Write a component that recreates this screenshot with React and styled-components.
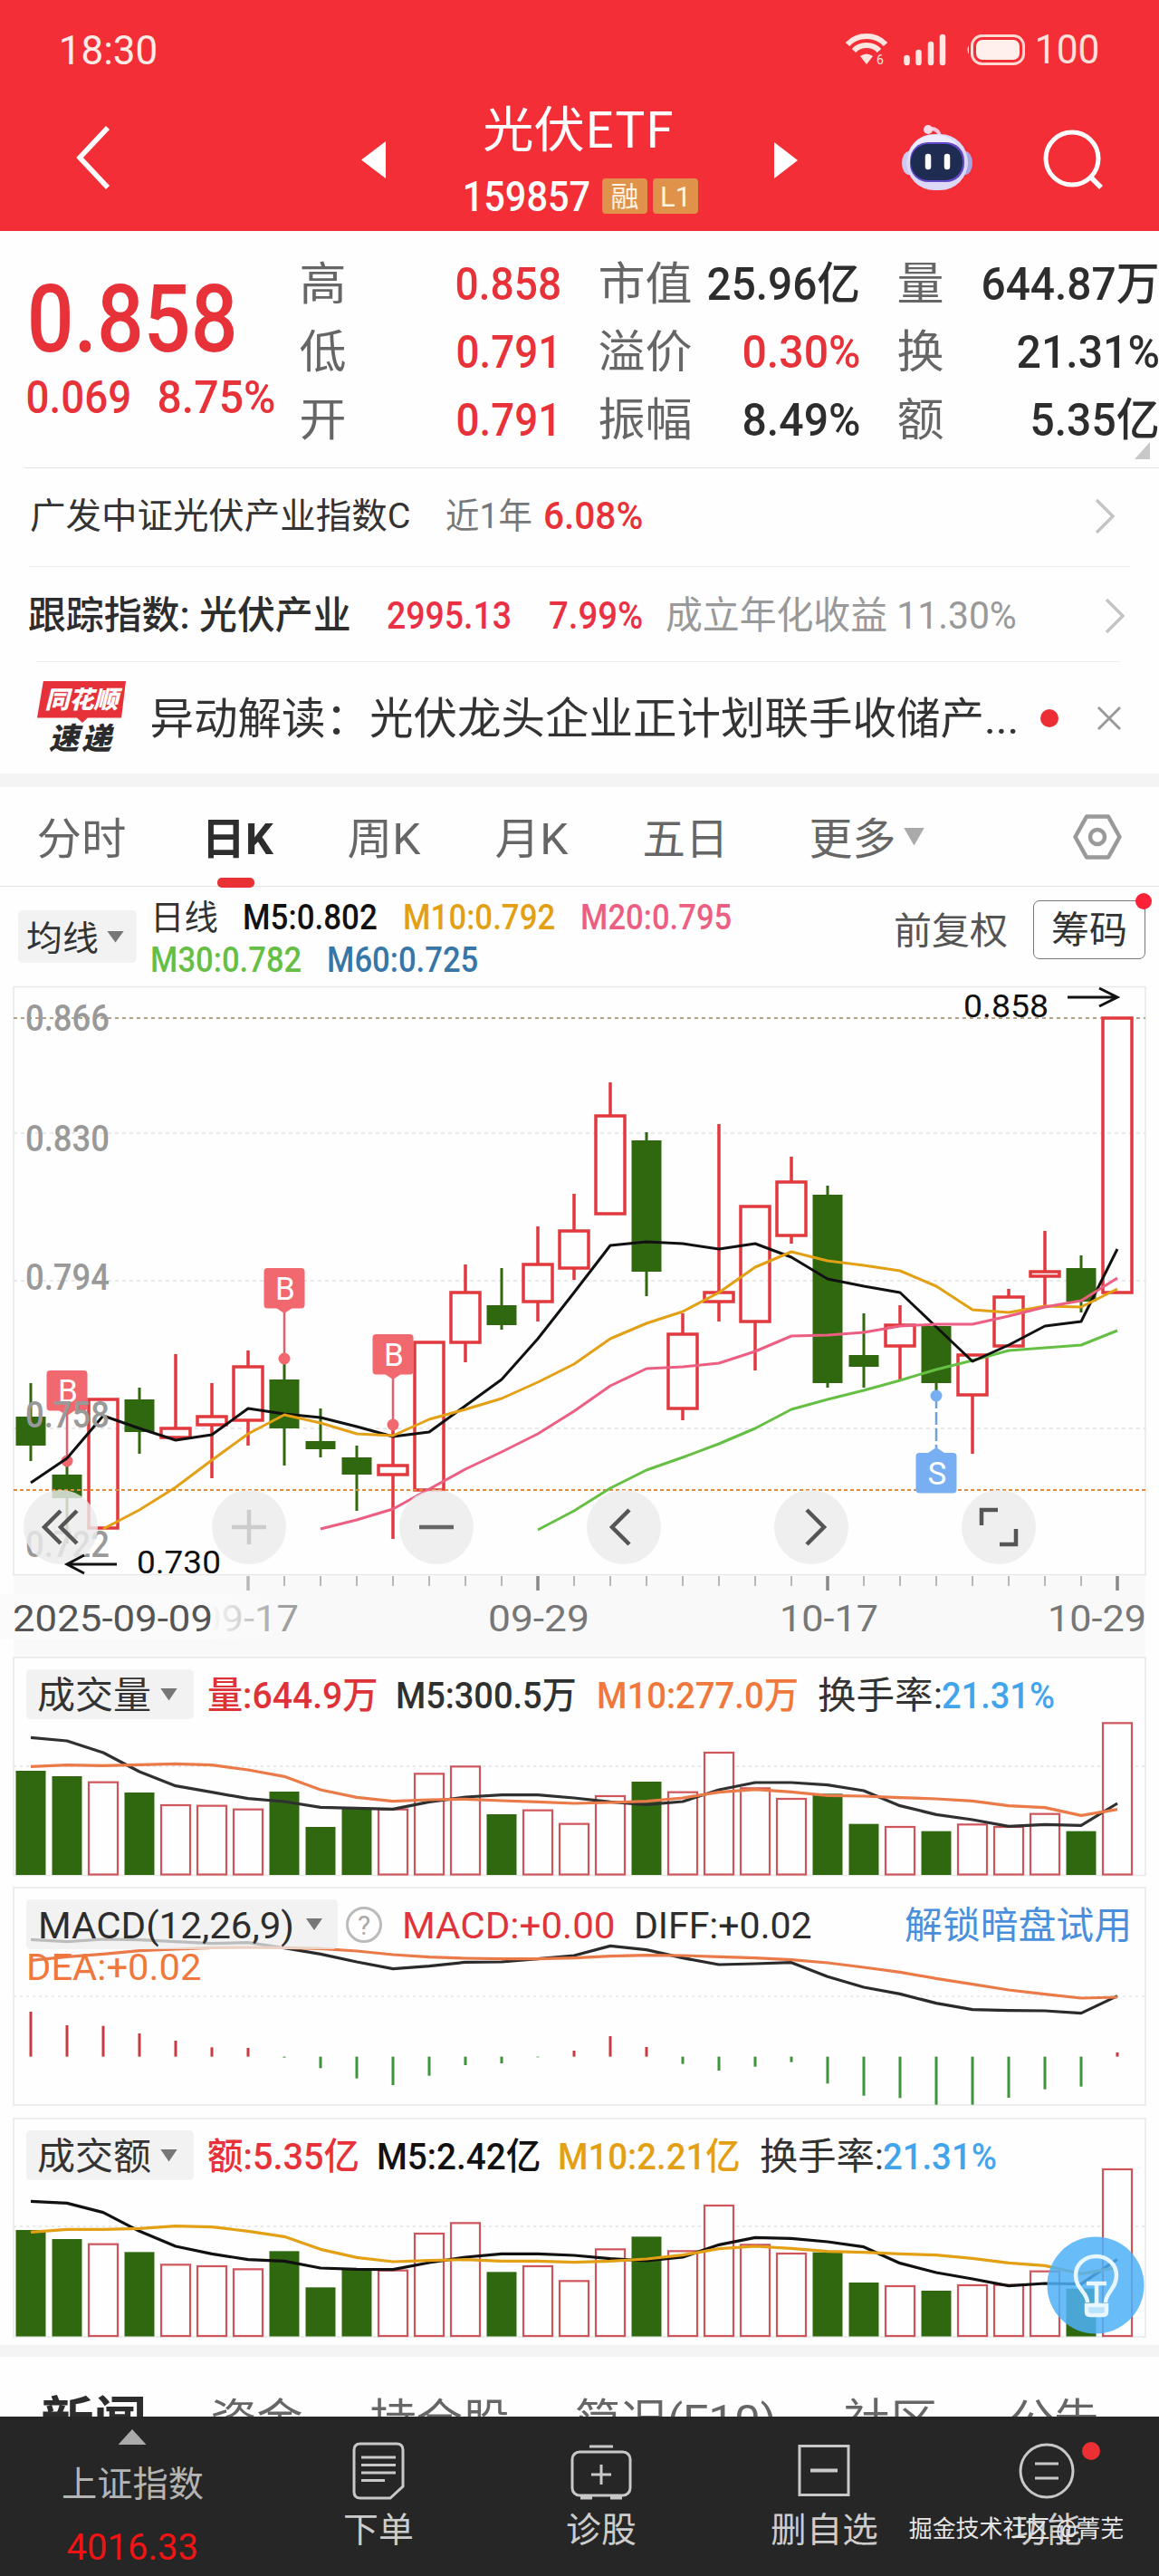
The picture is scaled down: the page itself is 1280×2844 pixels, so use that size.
import { useLayoutEffect, useRef, useState } from 'react'
import styled, { createGlobalStyle } from 'styled-components'

const red = '#e8323a'
const green = '#30680f'
const orange = '#f0783c'
const yellow = '#e3a014'
const pink = '#ec5f83'
const lime = '#66bf45'
const blue = '#42a5ec'

// Text that is squeezed to a given width, the way the condensed DIN digits look
const Fit = ({ children, w, size = 41, ...rest }) => {
  const ref = useRef()
  const [scale, setScale] = useState(1)
  const pad = size * 0.1

  useLayoutEffect(() => {
    setScale((w + pad) / ref.current.offsetWidth)
  }, [w, pad, children])

  return (
    <Text $w={w} $size={size} {...rest}>
      <span
        ref={ref}
        style={{ transform: `translateX(${-pad / 2}px) scaleX(${scale})` }}
      >
        {children}
      </span>
    </Text>
  )
}

// one candle = high, top of body, bottom of body, low
const candles = [
  ['g', 1527, 1564, 1596, 1613],
  ['g', 1613, 1628, 1654, 1704],
  ['r', 1545, 1545, 1687, 1687],
  ['g', 1532, 1545, 1581, 1605],
  ['r', 1495, 1577, 1587, 1587],
  ['r', 1527, 1564, 1573, 1632],
  ['r', 1491, 1509, 1568, 1596],
  ['g', 1500, 1523, 1577, 1618],
  ['g', 1555, 1591, 1600, 1609],
  ['g', 1596, 1609, 1628, 1668],
  ['r', 1573, 1618, 1628, 1699],
  ['r', 1482, 1482, 1645, 1645],
  ['r', 1396, 1427, 1482, 1504],
  ['g', 1400, 1441, 1463, 1468],
  ['r', 1354, 1396, 1437, 1459],
  ['r', 1318, 1359, 1400, 1413],
  ['r', 1195, 1232, 1340, 1340],
  ['g', 1250, 1259, 1404, 1431],
  ['r', 1450, 1473, 1555, 1568],
  ['r', 1241, 1427, 1437, 1459],
  ['r', 1332, 1332, 1459, 1513],
  ['r', 1277, 1305, 1364, 1373],
  ['g', 1309, 1319, 1527, 1532],
  ['g', 1450, 1496, 1509, 1532],
  ['r', 1441, 1463, 1486, 1523],
  ['g', 1464, 1464, 1527, 1540],
  ['r', 1496, 1496, 1540, 1605],
  ['r', 1423, 1432, 1486, 1486],
  ['r', 1359, 1404, 1409, 1443],
  ['g', 1386, 1400, 1437, 1449],
  ['r', 1124, 1124, 1427, 1427],
]
const m5 = [1637, 1610, 1563, 1577, 1590, 1584, 1555, 1561, 1565, 1575, 1586, 1581, 1552, 1523, 1478, 1427, 1375, 1371, 1373, 1379, 1373, 1388, 1412, 1420, 1427, 1465, 1503, 1485, 1464, 1459, 1379]
const m10 = [1688, 1667, 1642, 1612, 1583, 1562, 1571, 1583, 1585, 1567, 1556, 1544, 1526, 1506, 1478, 1461, 1448, 1427, 1399, 1382, 1392, 1397, 1403, 1420, 1446, 1449, 1442, 1443, 1423]
const m20 = [1688, 1678, 1666, 1644, 1622, 1603, 1583, 1558, 1530, 1511, 1509, 1505, 1492, 1475, 1474, 1471, 1464, 1462, 1462, 1453, 1443, 1436, 1411]
const m30 = [1689, 1668, 1643, 1623, 1609, 1594, 1577, 1556, 1545, 1535, 1524, 1512, 1502, 1491, 1488, 1485, 1469]

// sub charts keep their values in thirds of a pixel
const volume = {
  bars: [405, 423, 443, 477, 519, 521, 533, 474, 591, 531, 533, 415, 391, 549, 536, 581, 489, 441, 476, 345, 463, 498, 481, 581, 591, 605, 583, 591, 548, 605, 247],
  fast: [295, 306, 345, 408, 455, 476, 497, 507, 526, 529, 532, 508, 492, 485, 485, 495, 508, 517, 507, 468, 444, 444, 452, 471, 521, 550, 567, 589, 583, 586, 513],
  slow: [391, 386, 388, 385, 382, 386, 402, 424, 468, 493, 506, 501, 499, 504, 508, 513, 510, 506, 495, 476, 467, 475, 487, 489, 494, 498, 505, 521, 527, 553, 533],
}
const amount = {
  bars: [411, 441, 458, 484, 526, 531, 541, 481, 601, 542, 545, 423, 388, 550, 531, 580, 475, 433, 481, 330, 460, 489, 485, 585, 597, 612, 594, 593, 548, 605, 210],
  fast: [316, 322, 353, 415, 465, 490, 509, 514, 537, 541, 542, 519, 501, 490, 490, 495, 506, 513, 501, 460, 436, 439, 450, 467, 521, 552, 573, 596, 588, 590, 508],
  slow: [418, 409, 409, 406, 398, 401, 415, 433, 475, 502, 516, 512, 509, 514, 514, 518, 514, 507, 494, 473, 465, 472, 482, 485, 490, 494, 505, 520, 529, 556, 535],
}
const macd = {
  hist: [453, 498, 500, 525, 549, 571, 573, 605, 640, 674, 696, 665, 630, 624, 604, 582, 534, 570, 626, 648, 635, 620, 691, 731, 739, 761, 761, 738, 710, 701, 588],
  fast: [214, 221, 213, 215, 221, 227, 224, 242, 262, 288, 311, 302, 289, 288, 278, 267, 235, 248, 275, 297, 294, 290, 337, 372, 394, 425, 446, 449, 450, 458, 401],
  slow: [283, 271, 262, 251, 246, 241, 240, 241, 244, 252, 264, 272, 276, 278, 278, 275, 269, 266, 267, 271, 275, 281, 291, 306, 322, 343, 362, 381, 395, 408, 405],
}

const cx = (i) => 34 + i * 40
const line = (values, start = 0, base = 0, k = 1) =>
  values.map((v, i) => `${cx(i + start)},${base + v / k}`).join(' ')

const StatusBar = () => (
  <Status>
    <Fit w={105} size={45} $ml={67} $c='#ffece6'>18:30</Fit>
    <svg width='46' height='36' viewBox='0 0 46 36' fill='none'>
      <g stroke='#ffe6e0' strokeWidth='6'>
        <path d='M2 13 C13 1 33 1 44 13' />
        <path d='M9 20 C16 12 30 12 37 20' />
      </g>
      <path d='M16 26 Q23 21 30 26 L23 35 Z' fill='#ffe6e0' />
      <text x='34' y='35' fontSize='14' fill='#ffe6e0'>6</text>
    </svg>
    <Signal width='47' height='36' viewBox='0 0 47 36'>
      <path
        d='M3.5 27V32 M16.5 21V32 M30 12V32 M43 4V32'
        stroke='#ffe6e0'
        strokeWidth='6.5'
        strokeLinecap='round'
      />
    </Signal>
    <Battery width='66' height='34' viewBox='0 0 66 34'>
      <rect x='6.5' y='1.5' width='57' height='31' rx='11' fill='none' stroke='#ffd9d2' strokeWidth='3' />
      <rect x='11' y='6' width='48' height='22' rx='7' fill='#fff0ec' />
      <path d='M3 12 Q0 17 3 22 Z' fill='#ffe6e0' />
    </Battery>
    <Fit w={67} size={44} $ml={12} $c='#ffe0da'>100</Fit>
  </Status>
)

const Robot = () => (
  <svg width='78' height='74' viewBox='0 0 78 74'>
    <path d='M42 13 Q40 4 30 5' fill='none' stroke='#f4c9de' strokeWidth='4' />
    <circle cx='29' cy='6' r='5' fill='#f7dbe8' />
    <ellipse cx='8' cy='43' rx='8' ry='13' fill='#cfc9ef' />
    <ellipse cx='70' cy='43' rx='8' ry='13' fill='#a9a3e0' />
    <rect x='5' y='11' width='68' height='62' rx='31' fill='#dcd9f8' />
    <rect x='8' y='12' width='58' height='50' rx='27' fill='#eeedff' />
    <rect x='9' y='20' width='60' height='44' rx='20' fill='#6248c8' />
    <rect x='10' y='22' width='57' height='40' rx='19' fill='#1d2c50' />
    <path d='M29 36V47 M50 36V47' stroke='#fff' strokeWidth='6.5' strokeLinecap='round' />
  </svg>
)

const Header = () => (
  <HeaderWrap>
    <StatusBar />
    <Nav>
      <NavIcon $ml={84} width='38' height='70' viewBox='0 0 38 70'>
        <path d='M35 2 L4 35 L35 68' fill='none' stroke='#fff' strokeWidth='5.5' />
      </NavIcon>
      <NavIcon $ml={277} $mt={5} width='27' height='41' viewBox='0 0 27 41'>
        <path d='M27 0V41L0 20.500Z' fill='#fff' />
      </NavIcon>
      <TitleBlock>
        <Fit w={205} size={54} $ml={22} $c='#fff' $cjk>光伏ETF</Fit>
        <CodeRow>
          <Fit w={137} size={46} $ml={-1} $c='#fff' $b={500}>159857</Fit>
          <Tag $ml={15}>融</Tag>
          <Tag $ml={6}>L1</Tag>
        </CodeRow>
      </TitleBlock>
      <NavIcon $ml={84} $mt={5} width='26' height='40' viewBox='0 0 26 40'>
        <path d='M0 0V40L26 20Z' fill='#fff' />
      </NavIcon>
      <NavIcon as='div' $ml={115}>
        <Robot />
      </NavIcon>
      <NavIcon $ml={77} $mt={4} width='68' height='68' viewBox='0 0 68 68'>
        <circle cx='33' cy='33' r='29' fill='none' stroke='#fff' strokeWidth='5' />
        <path d='M53 53 L65 65' stroke='#fff' strokeWidth='5.5' />
      </NavIcon>
    </Nav>
  </HeaderWrap>
)

const quotes = [
  ['高', '0.858', 113, red, '市值', '25.96亿', 165, '#2d2d2d', '量', '644.87万', 192],
  ['低', '0.791', 112, red, '溢价', '0.30%', 126, red, '换', '21.31%', 153],
  ['开', '0.791', 112, red, '振幅', '8.49%', 126, '#2d2d2d', '额', '5.35亿', 138],
]

const Quote = () => (
  <QuoteWrap>
    <PriceBlock>
      <Fit w={222} size={104} $ml={2} $c={red} $b={500}>0.858</Fit>
      <PriceChange>
        <Fit w={112} size={50} $c={red} $b={500}>0.069</Fit>
        <Fit w={126} size={50} $ml={33} $c={red} $b={500}>8.75%</Fit>
      </PriceChange>
    </PriceBlock>
    <QuoteGrid>
      {quotes.map(([a, av, aw, ac, b, bv, bw, bc, c, cv, cw]) => (
        <QuoteRow key={a}>
          <Fit w={47} size={50} $ml={1} $c='#666'>{a}</Fit>
          <Value $w={238}>
            <Fit w={aw} size={50} $c={ac} $b={500}>{av}</Fit>
          </Value>
          <Fit w={99} size={50} $ml={45} $c='#666'>{b}</Fit>
          <Value $w={186}>
            <Fit w={bw} size={50} $c={bc} $b={500}>{bv}</Fit>
          </Value>
          <Fit w={47} size={50} $ml={45} $c='#666'>{c}</Fit>
          <Value $w={238}>
            <Fit w={cw} size={50} $c='#2d2d2d' $b={500}>{cv}</Fit>
          </Value>
        </QuoteRow>
      ))}
    </QuoteGrid>
    <Corner />
  </QuoteWrap>
)

const Chevron = ({ ml }) => (
  <NavIcon $ml={ml} width='23' height='40' viewBox='0 0 23 40'>
    <path d='M2 2 L20 20 L2 38' fill='none' stroke='#c4c4c4' strokeWidth='3.5' />
  </NavIcon>
)

const Infos = () => (
  <>
    <InfoRow $h={109} $pb={4} $l={32} $r={32}>
      <Fit w={416} size={39} $ml={35} $c='#333'>广发中证光伏产业指数C</Fit>
      <Fit w={92} size={39} $ml={43} $c='#777'>近1年</Fit>
      <Fit w={106} size={42} $ml={16} $c={red} $b={500}>6.08%</Fit>
      <Chevron ml={501} />
    </InfoRow>
    <InfoRow $h={105} $pb={-1} $l={40} $r={43}>
      <Fit w={353} size={42} $ml={33} $c='#2d2d2d' $b={500}>跟踪指数: 光伏产业</Fit>
      <Fit w={134} size={42} $ml={43} $c='#ea3045' $b={500}>2995.13</Fit>
      <Fit w={100} size={42} $ml={45} $c='#ea3045' $b={500}>7.99%</Fit>
      <Fit w={384} size={42} $ml={29} $c='#999'>成立年化收益 11.30%</Fit>
      <Chevron ml={99} />
    </InfoRow>
    <NewsRow>
      <NewsLogo>
        <LogoTop>同花顺</LogoTop>
        <LogoBottom>速递</LogoBottom>
      </NewsLogo>
      <Fit w={955} size={48} $ml={29} $mt={3} $c='#333'>异动解读：光伏龙头企业正计划联手收储产...</Fit>
      <Dot $ml={26} />
      <NavIcon $ml={42} width='28' height='28' viewBox='0 0 28 28'>
        <path d='M2 2 L26 26 M26 2 L2 26' stroke='#999' strokeWidth='3' />
      </NavIcon>
    </NewsRow>
  </>
)

const tabs = [
  ['分时', 94, 43],
  ['日K', 75, 88],
  ['周K', 76, 86],
  ['月K', 76, 87],
  ['五日', 90, 87],
  ['更多', 91, 94],
]

const Tabs = () => (
  <TabRow>
    {tabs.map(([name, w, ml], i) => (
      <Tab key={name} $ml={ml} $active={i === 1}>
        <Fit w={w} size={48} $c={i === 1 ? '#2d2d2d' : '#666'} $b={i === 1 ? 700 : 400}>
          {name}
        </Fit>
      </Tab>
    ))}
    <Caret $ml={11} $w={23} $h={20} $c='#aaa' />
    <NavIcon $ml={164} width='54' height='50' viewBox='0 0 54 50'>
      <path d='M15 2.500H39L51.500 25L39 47.500H15L2.500 25Z' fill='none' stroke='#999' strokeWidth='4.500' strokeLinejoin='round' />
      <circle cx='27' cy='25' r='8' fill='none' stroke='#999' strokeWidth='4.500' />
    </NavIcon>
  </TabRow>
)

const Averages = () => (
  <AverageRow>
    <Select $w={131} $h={58} $ml={20}>
      <Fit w={76} size={38} $c='#333'>均线</Fit>
      <Caret $ml={11} $w={19} $h={13} $c='#777' />
    </Select>
    <AverageList>
      <Legend>
        <Fit w={71} size={38} $c='#333'>日线</Fit>
        <Fit w={145} size={38} $ml={31} $c='#111' $b={500}>M5:0.802</Fit>
        <Fit w={164} size={38} $ml={32} $c={yellow} $b={500}>M10:0.792</Fit>
        <Fit w={163} size={38} $ml={32} $c={pink} $b={500}>M20:0.795</Fit>
      </Legend>
      <Legend>
        <Fit w={163} size={38} $c={lime} $b={500}>M30:0.782</Fit>
        <Fit w={163} size={38} $ml={32} $c='#3676a8' $b={500}>M60:0.725</Fit>
      </Legend>
    </AverageList>
    <Fit w={122} size={41} $ml={182} $c='#555'>前复权</Fit>
    <ChipButton>
      <Fit w={80} size={41} $mt={2} $c='#333'>筹码</Fit>
      <ChipDot />
    </ChipButton>
  </AverageRow>
)

const Marker = ({ x, top, to, label, sell }) => {
  const c = sell ? '#78aff2' : '#f1686e'
  const tip = sell ? `M${x - 9} ${top} l9 -6 l9 6z` : `M${x - 9} ${top + 44} l9 6 l9 -6z`
  return (
    <g>
      <path
        d={sell ? `M${x} ${to}V${top - 5}` : `M${x} ${top + 48}V${to}`}
        stroke={sell ? '#6f9fe0' : '#e0606c'}
        strokeWidth='2.500'
        strokeDasharray={sell ? '14 4' : undefined}
      />
      <circle cx={x} cy={to} r='6.500' fill={c} />
      <rect x={x - 22.5} y={top} width='45' height='44.500' rx='4' fill={c} />
      <path d={tip} fill={c} />
      <text x={x + 1} y={top + 35} fontSize='35' fill='#fff' textAnchor='middle'>
        {label}
      </text>
    </g>
  )
}

const Candle = ({ i, data }) => {
  const [type, high, top, bottom, low] = data
  const x = cx(i)
  if (type === 'g') {
    return (
      <g fill={green}>
        <rect x={x - 1.5} y={high} width='3' height={low - high} />
        <rect x={x - 16.5} y={top} width='33' height={bottom - top} />
      </g>
    )
  }
  return (
    <g stroke='#e1393d' strokeWidth='3.500' fill='none'>
      <path d={`M${x} ${high}V${top}M${x} ${bottom}V${low}`} />
      <rect x={x - 16} y={top} width='32' height={bottom - top} />
    </g>
  )
}

const zoomIcons = [
  [67, 'M0 -18 L-18 0 L0 18 M18 -18 L0 0 L18 18', '#555'],
  [275, 'M-19 0H19M0 -19V19', '#ccc'],
  [482, 'M-19 0H19', '#666'],
  [689, 'M6 -19L-13 0L6 19', '#555'],
  [896, 'M-5 -19L14 0L-5 19', '#555'],
  [1103, 'M-1 -19H-19V-2M1 19H19V2', '#555'],
]

const Kline = () => (
  <Svg width='1280' height='740' viewBox='0 1089 1280 740'>
    <defs>
      <linearGradient id='fade'>
        <stop offset='0.750' stopColor='#fbfbfb' />
        <stop offset='1' stopColor='#fbfbfb' stopOpacity='0' />
      </linearGradient>
    </defs>
    <rect x='15' y='1738' width='1250' height='91' fill='#f9f9f9' />
    <rect x='15' y='1089.500' width='1250' height='649' fill='#fefefe' stroke='#e8e8e8' strokeWidth='1.500' />
    <path d='M15 1124H1265' stroke='#b3a486' strokeWidth='2' strokeDasharray='4 4' />
    <path d='M15 1251H1265M15 1414H1265M15 1577H1265' stroke='#e2e2e2' strokeWidth='1.500' strokeDasharray='4 4' />
    {candles.map((c, i) => (
      <Candle key={i} i={i} data={c} />
    ))}
    <path d='M15 1645H1265' stroke='#e08a3c' strokeWidth='2' strokeDasharray='4 3' />
    <Marker x={74} top={1513} to={1613} label='B' />
    <Marker x={314} top={1400} to={1500} label='B' />
    <Marker x={434} top={1473} to={1573} label='B' />
    <Marker x={1034} top={1604} to={1541} label='S' sell />
    <g fill='none' strokeWidth='3' strokeLinejoin='round'>
      <polyline points={line(m30, 14)} stroke={lime} />
      <polyline points={line(m5)} stroke='#111' />
      <polyline points={line(m10, 2)} stroke={yellow} />
      <polyline points={line(m20, 8)} stroke={pink} />
    </g>
    <g fontSize='41' fontWeight='500' fill='#999'>
      {[['0.866', 1138], ['0.830', 1271], ['0.794', 1424], ['0.758', 1576], ['0.722', 1719]].map(([t, y]) => (
        <text key={t} x='28' y={y} textLength='93' lengthAdjust='spacingAndGlyphs'>
          {t}
        </text>
      ))}
    </g>
    {zoomIcons.map(([x, d, c]) => (
      <g key={x} transform={`translate(${x} 1686)`}>
        <circle r='41' fill='#ebebeb' fillOpacity='0.820' />
        <path d={d} fill='none' stroke={c} strokeWidth='4.500' />
      </g>
    ))}
    <g fontSize='35' fill='#111'>
      <text x='1064' y='1123' textLength='94' lengthAdjust='spacingAndGlyphs'>0.858</text>
      <text x='151' y='1737' textLength='93' lengthAdjust='spacingAndGlyphs'>0.730</text>
      <path
        d='M1179 1101H1233M1214 1091L1234 1101L1214 1111M129 1727H75M93 1717L74 1727L93 1737'
        fill='none'
        stroke='#111'
        strokeWidth='3'
      />
    </g>
    {candles.map((c, i) =>
      i < 6 ? null : (
        <path
          key={i}
          d={`M${cx(i)} 1740V${(i - 6) % 8 ? 1751 : 1756}`}
          stroke={(i - 6) % 8 || i === 6 ? '#b8b8b8' : '#888'}
          strokeWidth={(i - 6) % 8 ? 2 : 3.5}
        />
      )
    )}
    <g fontSize='41' fill='#777'>
      <text x='220' y='1801' textLength='110' lengthAdjust='spacingAndGlyphs' fill='#a0a0a0'>09-17</text>
      <text x='539' y='1801' textLength='112' lengthAdjust='spacingAndGlyphs'>09-29</text>
      <text x='861' y='1801' textLength='109' lengthAdjust='spacingAndGlyphs'>10-17</text>
      <text x='1157' y='1801' textLength='109' lengthAdjust='spacingAndGlyphs'>10-29</text>
      <rect x='0' y='1760' width='310' height='50' fill='url(#fade)' />
      <text x='14' y='1801' textLength='221' lengthAdjust='spacingAndGlyphs' fill='#555'>2025-09-09</text>
    </g>
  </Svg>
)

const BarChart = ({ data, base, top, bottom, grid, fast, slow }) => (
  <Svg width='1280' height={bottom - top + 2} viewBox={`0 ${top} 1280 ${bottom - top + 2}`}>
    <rect x='15' y={top + 1} width='1250' height={bottom - top} fill='#fefefe' stroke='#e8e8e8' strokeWidth='1.500' />
    <path d={`M15 ${grid}H1265`} stroke='#e2e2e2' strokeWidth='1.500' strokeDasharray='3 4' />
    {data.bars.map((v, i) => {
      const y = base + v / 3
      return candles[i][0] === 'g' ? (
        <rect key={i} x={cx(i) - 16.5} y={y} width='33' height={bottom - y + 0.5} fill={green} />
      ) : (
        <rect key={i} x={cx(i) - 16} y={y} width='32' height={bottom - y} fill='#fefefe' stroke='#d0555a' strokeWidth='2.200' />
      )
    })}
    <g fill='none' strokeWidth='3.200' strokeLinejoin='round'>
      <polyline points={line(data.fast, 0, base, 3)} stroke={fast} />
      <polyline points={line(data.slow, 0, base, 3)} stroke={slow} />
    </g>
  </Svg>
)

const MacdChart = () => (
  <Svg width='1280' height='242' viewBox='0 2083 1280 242'>
    <rect x='15' y='2084' width='1250' height='240' fill='#fefefe' stroke='#e8e8e8' strokeWidth='1.500' />
    <path d='M15 2204H1265' stroke='#e8e8e8' strokeWidth='1.500' strokeDasharray='3 4' />
    {macd.hist.map((v, i) => (
      <path
        key={i}
        d={`M${cx(i)} 2270.600V${2070 + v / 3}`}
        stroke={v < 602 ? '#c93a40' : '#3f9438'}
        strokeWidth='3'
      />
    ))}
    <g fill='none' strokeWidth='3.200' strokeLinejoin='round'>
      <polyline points={line(macd.fast, 0, 2070, 3)} stroke='#2a2a2a' />
      <polyline points={line(macd.slow, 0, 2070, 3)} stroke='#ea7a48' />
    </g>
  </Svg>
)

const VolumePanel = () => (
  <Panel $h={254}>
    <BarChart data={volume} base={1820} top={1829} bottom={2069.5} grid={1950} fast='#2f3030' slow='#ea7a48' />
    <PanelHead>
      <Select $w={185} $h={55} $ml={29}>
        <Fit w={122} size={41} $ml={1} $c='#333'>成交量</Fit>
        <Caret $ml={12} $w={19} $h={14} $c='#777' />
      </Select>
      <Fit w={184} $ml={17} $c='#dd3238' $b={500}>量:644.9万</Fit>
      <Fit w={196} $ml={24} $c='#2f3030' $b={500}>M5:300.5万</Fit>
      <Fit w={219} $ml={26} $c={orange} $b={500}>M10:277.0万</Fit>
      <Fit w={134} $ml={25} $c='#333'>换手率:</Fit>
      <Fit w={121} $ml={3} $c={blue} $b={500}>21.31%</Fit>
    </PanelHead>
  </Panel>
)

const MacdPanel = () => (
  <Panel $h={255}>
    <MacdChart />
    <div>
      <PanelHead>
        <Select $w={344} $h={55} $ml={29}>
          <Fit w={279} $ml={2} $c='#2d2d2d'>MACD(12,26,9)</Fit>
          <Caret $ml={15} $w={18} $h={13} $c='#777' />
        </Select>
        <Help>?</Help>
        <Fit w={231} $ml={24} $c='#e0343a'>MACD:+0.00</Fit>
        <Fit w={193} $ml={25} $c='#2d2d2d'>DIFF:+0.02</Fit>
        <Fit w={247} $ml={106} $c='#4a8fdc'>解锁暗盘试用</Fit>
      </PanelHead>
      <SecondLine>
        <Fit w={189} size={40} $ml={31} $c={orange}>DEA:+0.02</Fit>
      </SecondLine>
    </div>
  </Panel>
)

const AmountPanel = () => (
  <Panel $h={251}>
    <BarChart data={amount} base={2325} top={2338} bottom={2579} grid={2458} fast='#111' slow={yellow} />
    <PanelHead>
      <Select $w={185} $h={55} $ml={29}>
        <Fit w={122} size={41} $ml={1} $c='#333'>成交额</Fit>
        <Caret $ml={12} $w={19} $h={14} $c='#777' />
      </Select>
      <Fit w={164} $ml={17} $c={red} $b={500}>额:5.35亿</Fit>
      <Fit w={177} $ml={23} $c='#111' $b={500}>M5:2.42亿</Fit>
      <Fit w={198} $ml={23} $c={yellow} $b={500}>M10:2.21亿</Fit>
      <Fit w={133} $ml={25} $c='#333'>换手率:</Fit>
      <Fit w={122} $ml={3} $c={blue} $b={500}>21.31%</Fit>
    </PanelHead>
    <Bulb width='108' height='108' viewBox='0 0 108 108'>
      <circle cx='54' cy='54' r='53.500' fill='#4db2f8' fillOpacity='0.850' />
      <g fill='none' stroke='#e8f7ff' strokeWidth='4.500'>
        <path d='M45 73 C45 62 32 58 32 43 C32 31 42 22 54.500 22 C67 22 77 31 77 43 C77 58 65 62 65 73' />
        <path d='M44 52H66M55 52V76' />
        <path d='M44 76H66V83Q66 87 62 87H48Q44 87 44 83Z' fill='#b9e3fc' />
      </g>
    </Bulb>
  </Panel>
)

const newsTabs = [
  ['新闻', 111, 48, 56, 700],
  ['资金', 97, 76],
  ['持仓股', 149, 79],
  ['简况(F10)', 218, 77],
  ['社区', 99, 79],
  ['公告', 94, 84],
]

const BottomBar = () => (
  <Bottom>
    <IndexItem>
      <Caret $up $w={31} $h={17} $c='#aaa' />
      <Fit w={153} size={39} $mt={25} $c='#b4b4b4'>上证指数</Fit>
      <Fit w={141} size={40} $mt={30} $c='#f01414'>4016.33</Fit>
    </IndexItem>
    <Action>
      <svg width='58' height='64' viewBox='0 0 58 64' fill='none' stroke='#c8c8c8' strokeWidth='3'>
        <path d='M9 2H49Q56 2 56 9V49L42 62H9Q2 62 2 55V9Q2 2 9 2Z' />
        <path d='M10 17H48M10 25.500H48M10 34H48M10 42.500H36' />
      </svg>
      <Fit w={74} size={38} $c='#ccc'>下单</Fit>
    </Action>
    <Action>
      <svg width='68' height='64' viewBox='0 0 68 64' fill='none' stroke='#c8c8c8' strokeWidth='3'>
        <path d='M21 5H47' />
        <rect x='2' y='11' width='64' height='48' rx='8' />
        <path d='M34 25V47M23 36H45' />
        <path d='M11 61.500H24M44 61.500H57' strokeWidth='4' />
      </svg>
      <Fit w={74} size={38} $c='#ccc'>诊股</Fit>
    </Action>
    <Action>
      <svg width='58' height='64' viewBox='0 0 58 64' fill='none' stroke='#c8c8c8' strokeWidth='3'>
        <rect x='2' y='4.500' width='54' height='54' />
        <path d='M14 31.500H44' strokeWidth='4' />
      </svg>
      <Fit w={115} size={38} $c='#ccc'>删自选</Fit>
    </Action>
    <Action>
      <svg width='62' height='64' viewBox='0 0 62 64' fill='none' stroke='#c8c8c8' strokeWidth='3'>
        <circle cx='31' cy='32' r='29' />
        <path d='M18 24H44M18 40H44' />
      </svg>
      <ActionDot />
      <Fit w={74} size={38} $c='#ccc'>功能</Fit>
    </Action>
    <Watermark>
      <Fit w={235} size={26} $c='#e6e6e6'>掘金技术社区 @菁芜</Fit>
    </Watermark>
  </Bottom>
)

const App = () => {
  return (
    <>
      <GlobalStyle />
      <Screen>
        <Header />
        <Quote />
        <Infos />
        <Divider $h={15} />
        <Tabs />
        <Averages />
        <Kline />
        <VolumePanel />
        <MacdPanel />
        <AmountPanel />
        <Divider $h={13} />
        <NewsTabs>
          {newsTabs.map(([name, w, ml, size = 49, b = 400]) => (
            <Fit key={name} w={w} size={size} $ml={ml} $b={b} $c={b === 700 ? '#2d2d2d' : '#666'}>
              {name}
            </Fit>
          ))}
        </NewsTabs>
        <BottomBar />
      </Screen>
    </>
  )
}

const GlobalStyle = createGlobalStyle`
  * {
    box-sizing: border-box;
  }

  body {
    margin: 0;
    background: #fefefe;
    font-family: Roboto, 'Noto Sans CJK SC', sans-serif;
  }

  svg {
    display: block;
    flex: none;
  }
`

const Screen = styled.main`
  width: 1280px;
  height: 2844px;
  overflow: hidden;
  background: #fefefe;
`

const Text = styled.div`
  flex: none;
  width: ${(p) => p.$w}px;
  margin-left: ${(p) => p.$ml || 0}px;
  margin-top: ${(p) => p.$mt || 0}px;
  font-size: ${(p) => p.$size}px;
  font-weight: ${(p) => p.$b || 400};
  font-family: ${(p) => (p.$cjk ? "'Noto Sans CJK SC', sans-serif" : 'inherit')};
  color: ${(p) => p.$c};
  line-height: 1;
  white-space: nowrap;

  span {
    display: inline-block;
    transform-origin: 0 50%;
    line-height: 1;
    vertical-align: top;
  }
`

const HeaderWrap = styled.header`
  height: 255px;
  background: #f32e37;
`

const Status = styled.div`
  display: flex;
  align-items: center;
  height: 110px;

  > svg:first-of-type {
    margin: 0 0 3px 762px;
  }
`

const Signal = styled.svg`
  margin-left: 18px;
`

const Battery = styled.svg`
  margin-left: 22px;
`

const Nav = styled.nav`
  display: flex;
  align-items: center;
  height: 128px;
`

const NavIcon = styled.svg`
  flex: none;
  margin-left: ${(p) => p.$ml || 0}px;
  margin-top: ${(p) => p.$mt || 0}px;
`

const TitleBlock = styled.div`
  width: 257px;
  height: 128px;
  margin-left: 88px;
  padding-top: 3px;
`

const CodeRow = styled.div`
  display: flex;
  align-items: center;
  margin-top: 30px;
  height: 39px;
`

const Tag = styled.span`
  width: 50px;
  height: 39px;
  margin-left: ${(p) => p.$ml}px;
  border-radius: 4px;
  background: #e0924a;
  color: #fff3e4;
  font-size: 31px;
  line-height: 41px;
  text-align: center;
`

const QuoteWrap = styled.section`
  position: relative;
  display: flex;
  height: 262px;
  background: linear-gradient(#e4e4e4, #e4e4e4) 26px 100% / 1254px 1.5px no-repeat;
`

const PriceBlock = styled.div`
  width: 332px;
  padding: 46px 0 0 33px;
`

const PriceChange = styled.div`
  display: flex;
  margin: 9px 0 0 -2px;
`

const QuoteGrid = styled.div`
  padding-top: 21px;
`

const QuoteRow = styled.div`
  display: flex;
  align-items: center;
  height: 75px;
`

const Value = styled.div`
  display: flex;
  justify-content: flex-end;
  width: ${(p) => p.$w}px;
`

const Corner = styled.i`
  position: absolute;
  right: 10px;
  bottom: 10px;
  width: 17px;
  height: 19px;
  background: #c8c8c8;
  clip-path: polygon(100% 0, 100% 100%, 0 100%);
`

const InfoRow = styled.div`
  display: flex;
  align-items: center;
  height: ${(p) => p.$h}px;
  padding-top: ${(p) => (p.$pb < 0 ? 3 : 1)}px;
  padding-bottom: ${(p) => Math.max(p.$pb, 0)}px;
  background: linear-gradient(#ececec, #ececec) ${(p) => p.$l}px 100% /
    ${(p) => 1280 - p.$l - p.$r}px 1.5px no-repeat;
`

const NewsRow = styled.div`
  display: flex;
  align-items: center;
  height: 123px;
`

const NewsLogo = styled.div`
  width: 98px;
  margin-left: 41px;
  text-align: center;
  font-weight: 900;
  font-style: italic;
`

const LogoTop = styled.div`
  height: 46px;
  background: #e6313a;
  clip-path: polygon(7% 0, 100% 0, 95% 88%, 57% 88%, 51% 100%, 45% 88%, 0 88%);
  color: #fff;
  font-size: 27px;
  line-height: 43px;
`

const LogoBottom = styled.div`
  color: #2b2b2b;
  font-size: 33px;
  letter-spacing: 3px;
  line-height: 35px;
`

const Dot = styled.i`
  flex: none;
  width: 20px;
  height: 20px;
  margin-left: ${(p) => p.$ml || 0}px;
  border-radius: 50%;
  background: #ec2f33;
`

const Divider = styled.div`
  height: ${(p) => p.$h}px;
  background: #f4f4f4;
`

const TabRow = styled.div`
  display: flex;
  align-items: center;
  height: 110px;
  border-bottom: 1.5px solid #e6e4e2;
`

const Tab = styled.div`
  display: flex;
  flex-direction: column;
  justify-content: center;
  height: 110px;
  margin-left: ${(p) => p.$ml}px;
  padding-top: 6px;

  &::after {
    content: '';
    display: ${(p) => (p.$active ? 'block' : 'none')};
    width: 41px;
    height: 11px;
    margin: 18px 0 -29px 15px;
    border-radius: 5px;
    background: #e83236;
  }
`

const Caret = styled.i`
  flex: none;
  width: ${(p) => p.$w}px;
  height: ${(p) => p.$h}px;
  margin-left: ${(p) => p.$ml || 0}px;
  background: ${(p) => p.$c};
  clip-path: ${(p) =>
    p.$up ? 'polygon(50% 0, 100% 100%, 0 100%)' : 'polygon(0 0, 100% 0, 50% 100%)'};
`

const AverageRow = styled.div`
  display: flex;
  height: 110px;
  align-items: center;
  padding-bottom: 12px;
`

const Select = styled.div`
  display: flex;
  align-items: center;
  flex: none;
  width: ${(p) => p.$w}px;
  height: ${(p) => p.$h}px;
  margin-left: ${(p) => p.$ml}px;
  padding-left: ${(p) => (p.$h > 55 ? 11 : 13)}px;
  border-radius: 5px;
  background: rgba(238, 238, 238, 0.75);

  ${AverageRow} & {
    margin-top: 12px;
  }

  ${Text} {
    margin-top: 3px;
  }
`

const AverageList = styled.div`
  display: flex;
  flex-direction: column;
  width: 639px;
  padding: 17px 0 0;
  margin-left: 17px;
`

const Legend = styled.div`
  display: flex;
  align-items: center;
  height: 47px;
`

const ChipButton = styled.div`
  position: relative;
  display: flex;
  align-items: center;
  justify-content: center;
  width: 124px;
  height: 65px;
  margin-left: 30px;
  margin-top: -4px;
  border: 1.5px solid #777;
  border-radius: 7px;
`

const ChipDot = styled(Dot)`
  position: absolute;
  top: -9px;
  right: -8px;
  width: 18px;
  height: 18px;
  background: #fb2238;
`

const Svg = styled.svg`
  overflow: visible;
`

const Panel = styled.section`
  position: relative;
  display: grid;
  height: ${(p) => p.$h}px;
  align-items: start;

  > * {
    grid-area: 1 / 1;
  }
`

const PanelHead = styled.div`
  display: flex;
  align-items: center;
  height: 55px;
  margin-top: 14px;

  > ${Text} {
    margin-top: 3px;
  }
`

const SecondLine = styled.div`
  display: flex;
  margin-top: 1px;
`

const Help = styled.div`
  flex: none;
  width: 40px;
  height: 40px;
  margin-left: 9px;
  border: 3px solid #bbb;
  border-radius: 50%;
  color: #aaa;
  font-size: 30px;
  line-height: 35px;
  text-align: center;
`

const Bulb = styled.svg`
  position: absolute;
  left: 1156px;
  top: 131px;
`

const NewsTabs = styled.div`
  display: flex;
  align-items: flex-start;
  height: 66px;
  padding-top: 46px;

  > :first-child {
    margin-top: -3px;
  }
`

const Bottom = styled.footer`
  position: relative;
  display: flex;
  height: 176px;
  background: #262626;
`

const IndexItem = styled.div`
  display: flex;
  flex-direction: column;
  align-items: center;
  width: 295px;
  padding: 14px 3px 0 0;
`

const Action = styled.div`
  position: relative;
  display: flex;
  flex-direction: column;
  align-items: center;
  gap: 14px;
  width: 246px;
  padding-top: 28px;
`

const ActionDot = styled(Dot)`
  position: absolute;
  top: 28px;
  left: 162px;
`

const Watermark = styled.div`
  position: absolute;
  left: 1005px;
  top: 111px;
`

export default App
